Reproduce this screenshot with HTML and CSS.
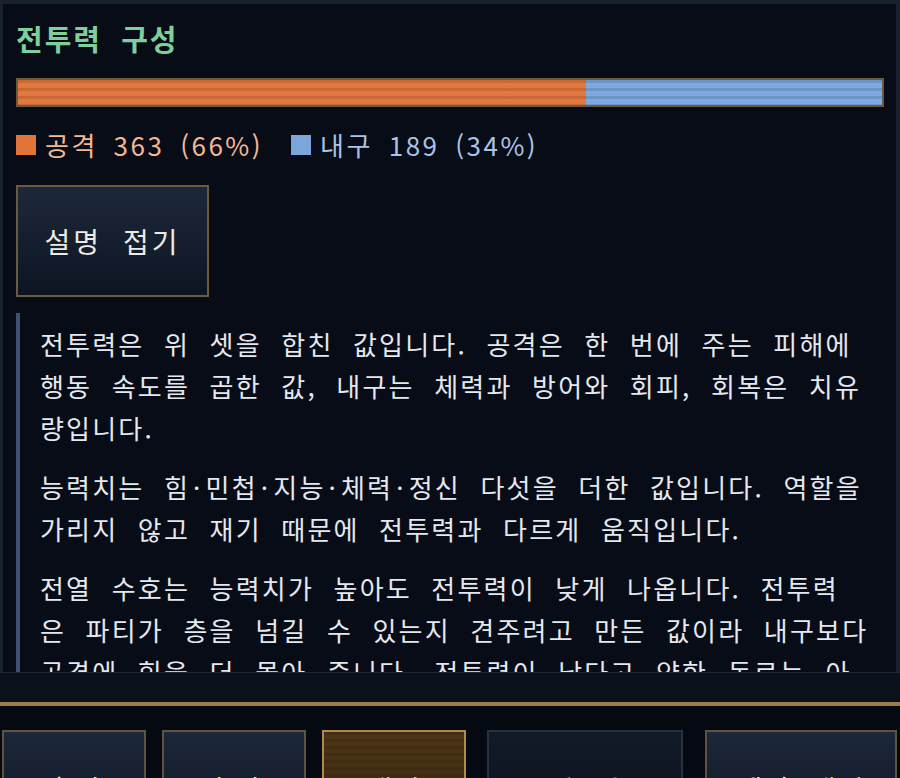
FILE: index.html
```html
<!DOCTYPE html>
<html lang="ko">
<head>
<meta charset="utf-8">
<title>전투력 구성</title>
<link rel="stylesheet" href="styles.css">
</head>
<body>
<div class="frame">
  <div class="panel">
    <h2 class="title">전투력 구성</h2>
    <div class="bar">
      <div class="fill atk" style="width:65.76%"></div>
      <div class="fill def" style="width:34.24%"></div>
    </div>
    <div class="legend">
      <span class="item atk-text"><span class="sq atk"></span>공격 363 (66%)</span>
      <span class="item def-text"><span class="sq def"></span>내구 189 (34%)</span>
    </div>
    <button class="btn toggle">설명 접기</button>
    <div class="desc">
      <p>전투력은 위 셋을 합친 값입니다. 공격은 한 번에 주는 피해에<br>행동 속도를 곱한 값, 내구는 체력과 방어와 회피, 회복은 치유<br>량입니다.</p>
      <p>능력치는 힘<span class="dot">·</span>민첩<span class="dot">·</span>지능<span class="dot">·</span>체력<span class="dot">·</span>정신 다섯을 더한 값입니다. 역할을<br>가리지 않고 재기 때문에 전투력과 다르게 움직입니다.</p>
      <p>전열 수호는 능력치가 높아도 전투력이 낮게 나옵니다. 전투력<br>은 파티가 층을 넘길 수 있는지 견주려고 만든 값이라 내구보다<br>공격에 힘을 더 몰아 줍니다. 전투력이 낮다고 약한 동료는 아<br>닙니다.</p>
    </div>
  </div>
</div>
<div class="band"></div>
<div class="footer">
  <button class="btn act w1">훈련</button>
  <button class="btn act w1">휴식</button>
  <button class="btn act w1 on">대기</button>
  <button class="btn act w2 off" disabled>은퇴 권유</button>
  <button class="btn act w3">계약 해지</button>
</div>
</body>
</html>
```

FILE: styles.css
```css
* { box-sizing: border-box; }
html, body {
  margin: 0;
  height: 778px;
  overflow: hidden;
  background: #060b14;
  font-family: "Noto Sans CJK KR", "Noto Sans", sans-serif;
}
.frame {
  background: #18222f;
  padding: 4px 4px 0 3px;
}
.panel {
  height: 668px;
  overflow: hidden;
  background: #080c17;
  padding: 14px 12px 0 13px;
}
.title {
  margin: 0;
  color: #7fcf9c;
  font-size: 29px;
  font-weight: 700;
  line-height: 40px;
  letter-spacing: 2px;
  word-spacing: 9px;
}
.bar {
  margin-top: 20px;
  height: 29px;
  border: 2px solid #6a5a40;
  display: flex;
  background: #0a0e18;
}
.fill {
  height: 100%;
  background-image: repeating-linear-gradient(to bottom, rgba(0,0,0,0.1) 0 3px, rgba(255,255,255,0.03) 3px 8px);
}
.fill.atk { background-color: #e07439; }
.fill.def { background-color: #7ba7dd; }
.legend {
  margin-top: 20px;
  display: flex;
  gap: 28px;
  font-size: 26px;
  line-height: 36px;
  letter-spacing: 2.5px;
  word-spacing: 6px;
}
.item { display: flex; align-items: center; gap: 9px; }
.sq { width: 20px; height: 20px; display: inline-block; }
.sq.atk { background: #e07439; }
.sq.def { background: #7aa6dc; }
.atk-text { color: #f2b894; }
.def-text { color: #a9c3e6; }
.btn {
  font-family: inherit;
  color: #ecebe2;
  border: 2px solid #6a5a40;
  background: linear-gradient(to bottom, #1d283a, #0d1522);
  cursor: pointer;
}
.toggle {
  display: block;
  margin-top: 22px;
  width: 193px;
  height: 112px;
  font-size: 28px;
  letter-spacing: 3px;
  word-spacing: 10px;
}
.desc {
  margin-top: 16px;
  border-left: 4px solid #3f5272;
  padding: 10px 10px 0 20px;
  color: #e4e8ef;
  font-size: 26px;
  line-height: 42px;
  letter-spacing: 2.2px;
  word-spacing: 10px;
  white-space: nowrap;
}
.desc p { margin: 0 0 17px; }
.dot { margin: 0 3px; }
.band {
  height: 30px;
  background: #0b111b;
  border-top: 1px solid #1c2636;
}
.footer {
  border-top: 4px solid #9b7b4a;
  background: #050a12;
  display: flex;
  gap: 16px;
  padding: 24px 0 0 2px;
}
.act {
  flex: none;
  height: 100px;
  font-size: 28px;
  padding-top: 18px;
  letter-spacing: 2px;
  word-spacing: 8px;
  border-color: #5e5240;
}
.w1 { width: 144px; }
.w2 { width: 196px; margin-left: 5px; }
.w3 { width: 192px; margin-left: 6px; }
.on {
  color: #ecc468;
  border-color: #b08a4a;
  background: repeating-linear-gradient(to bottom, rgba(0,0,0,0.12) 0 3px, transparent 3px 7px), linear-gradient(to bottom, #4e3617, #3a2810);
}
.off {
  color: #737a84;
  border-color: #28323f;
  background: linear-gradient(to bottom, #111a27, #0b121d);
}
```
